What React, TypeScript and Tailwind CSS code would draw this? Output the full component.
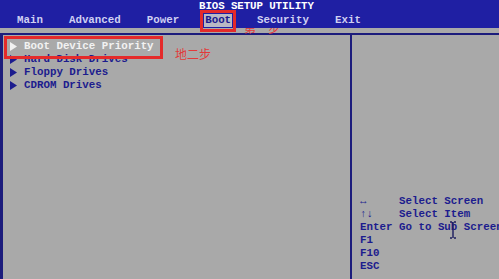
import React from "react";

const Tri = () => (
  <svg width="7" height="9" viewBox="0 0 7 9" className="shrink-0">
    <polygon points="0,0 7,4.5 0,9" fill="currentColor" />
  </svg>
);

export default function App() {
  const mono = { fontFamily: '"Liberation Mono", "DejaVu Sans Mono", monospace' };
  const cjk = { fontFamily: '"Noto Sans CJK SC", sans-serif' };
  const items = ["Boot Device Priority", "Hard Disk Drives", "Floppy Drives", "CDROM Drives"];
  const help: [string, string][] = [
    ["↔", "Select Screen"],
    ["↑↓", "Select Item"],
    ["Enter", "Go to Sub Screen"],
    ["F1", ""],
    ["F10", ""],
    ["ESC", ""],
  ];
  return (
    <div
      className="relative w-[499px] h-[279px] overflow-hidden bg-[#a9a9a9] flex flex-col text-[10.8px] font-bold leading-[13px]"
      style={mono}
    >
      {/* red label behind header */}
      <div className="absolute left-[244px] top-[21px] text-[12px] leading-[14px] text-[#e23a3a] font-normal z-0" style={cjk}>
        第一步
      </div>
      <div className="relative z-10 h-[28px] bg-[#1f1fa3] flex flex-col">
        <div className="pl-[199px] pt-[1px] h-[12px] text-white leading-[11px] tracking-[-0.1px]">
          BIOS SETUP UTILITY
        </div>
        <div className="flex pl-[17px] gap-[26px] h-[16px] items-center text-[#cfd0f2]">
          <span>Main</span>
          <span>Advanced</span>
          <span>Power</span>
          <span className="relative bg-[#b9b9c4] text-[#1a1a8e] px-[1px] -mx-[1px]">
            Boot
            <span className="absolute -left-[4px] -top-[4px] w-[36px] h-[22px] border-[3px] border-[#e42a2a]" />
          </span>
          <span>Security</span>
          <span>Exit</span>
        </div>
      </div>
      <div className="h-[5px]" />
      <div className="flex-1 flex border-t-2 border-l-[3px] border-[#1c1c7c]">
        <div className="relative w-[349px] shrink-0 border-r-2 border-[#1c1c7c] pt-[5px] pl-[7px]">
          {items.map((t, i) => (
            <div key={t} className={`flex items-center gap-[7px] h-[13px] ${i === 0 ? "text-[#f2f2f2]" : "text-[#1c1c8e]"}`}>
              <Tri />
              <span>{t}</span>
            </div>
          ))}
          <div className="absolute left-[1px] top-[1px] w-[159px] h-[23px] border-[3px] border-[#e42a2a]" />
          <div className="absolute left-[172px] top-[12px] text-[12px] leading-[14px] text-[#e23a3a] font-normal" style={cjk}>
            地二步
          </div>
        </div>
        <div className="relative flex-1 min-w-0 overflow-hidden flex flex-col justify-end pb-[6px] pl-[8px] text-[#1c1c8e]">
          {help.map(([k, d]) => (
            <div key={k} className="flex h-[13px]">
              <span className="w-[39px] shrink-0">{k}</span>
              <span className="whitespace-nowrap">{d}</span>
            </div>
          ))}
          <svg className="absolute left-[98px] top-[186px]" width="6" height="18" viewBox="0 0 6 18">
            <path d="M0 1 H2 M4 1 H6 M3 1 V17 M0 17 H2 M4 17 H6" stroke="#1c1c5e" strokeWidth="1.4" fill="none" />
          </svg>
        </div>
      </div>
    </div>
  );
}
